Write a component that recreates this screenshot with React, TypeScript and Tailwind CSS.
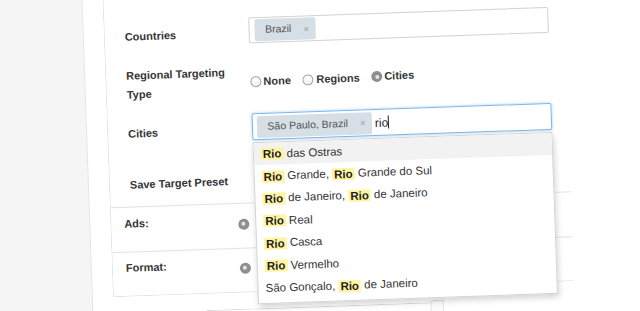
import React from 'react';

const label = 'text-[11px] font-bold text-[#353535] leading-[16px]';

function Radio({ checked }: { checked?: boolean }) {
  if (checked) {
    return (
      <span className="w-[11px] h-[11px] rounded-full bg-[#8e8e8e] flex items-center justify-center shrink-0">
        <span className="w-[4px] h-[4px] rounded-full bg-[#e6e6e6]" />
      </span>
    );
  }
  return (
    <span className="w-[11px] h-[11px] rounded-full border border-[#a0a0a0] bg-gradient-to-b from-white to-[#f0f0f0] shrink-0" />
  );
}

function Tag({ text }: { text: string }) {
  return (
    <span className="h-[22px] flex items-center bg-[#d6dee6] rounded-[2px] pl-[10.5px] pr-[6px] text-[10.5px] text-[#555] shrink-0">
      {text}
      <span className="ml-[12px] w-[6px] text-[10px] text-[#9aa4ad]">×</span>
    </span>
  );
}

// highlighted match inside a suggestion
function Hit() {
  return (
    <span className="inline-block h-[12px] leading-[12px] px-[2px] bg-[#fff4a3] font-bold text-[#1e1e1e]">
      Rio
    </span>
  );
}

const suggestions: React.ReactNode[] = [
  <><Hit /> das Ostras</>,
  <><Hit /> Grande, <Hit /> Grande do Sul</>,
  <><Hit /> de Janeiro, <Hit /> de Janeiro</>,
  <><Hit /> Real</>,
  <><Hit /> Casca</>,
  <><Hit /> Vermelho</>,
  <>São Gonçalo, <Hit /> de Janeiro</>,
];

export default function App() {
  return (
    <div className="w-[640px] h-[311px] overflow-hidden bg-[#f5f5f5] font-['Liberation_Sans',Arial,sans-serif]">
      <div className="w-[680px] h-[351px] mt-[-20px] ml-[-20px] flex -rotate-2 origin-[340px_175px]">
        {/* left gray strip */}
        <div className="w-[106.5px] shrink-0 bg-[#f5f5f5]" />

        {/* page */}
        <div className="flex-1 bg-white border-l border-[#e4e4e4] pl-[20.5px] flex flex-col">
          <div className="w-[461px] border-l border-b border-[#e2e2e2] rounded-bl-[3px] flex flex-col">
            {/* Targeting */}
            <div className="h-[220px] pt-[35px] pl-[20px] flex flex-col">
              <div className="flex items-center h-[26px]">
                <span className={`${label} w-[124px] mt-[4px]`}>Countries</span>
                <div className="w-[300px] h-[26px] border border-[#d2d2d2] rounded-[2px] flex items-center pl-[5px]">
                  <Tag text="Brazil" />
                </div>
              </div>

              <div className="flex items-center mt-[19px]">
                <span className="text-[11px] font-bold text-[#353535] leading-[19px] w-[124px]">
                  Regional Targeting
                  <br />
                  Type
                </span>
                <div className="flex items-center text-[11px] font-bold text-[#353535]">
                  <span className="w-[52px] flex items-center gap-[2px]">
                    <Radio />
                    None
                  </span>
                  <span className="w-[69px] flex items-center gap-[3px]">
                    <Radio />
                    Regions
                  </span>
                  <span className="flex items-center gap-[2px] -mt-[1px]">
                    <Radio checked />
                    Cities
                  </span>
                </div>
              </div>

              <div className="flex items-center h-[27px] mt-[13px]">
                <span className={`${label} w-[124px] mt-[4px]`}>Cities</span>
                <div className="relative z-10">
                  <div className="w-[300px] h-[27px] border border-[#79b7ec] rounded-[2px] shadow-[0_0_3px_rgba(90,160,230,0.55)] flex items-center pl-[4px]">
                    <Tag text="São Paulo, Brazil" />
                    <span className="ml-[3px] text-[12px] text-[#222]">rio</span>
                    <span className="w-px h-[13px] bg-[#222]" />
                  </div>

                  {/* suggestions */}
                  <div className="absolute left-0 top-[29px] w-[300px] bg-white border border-[#d4d4d4] shadow-[1px_3px_6px_rgba(0,0,0,0.18)] pb-[3px]">
                    {suggestions.map((s, i) => (
                      <div
                        key={i}
                        className={`h-[22.4px] flex items-center pl-[7px] text-[11.5px] text-[#333] whitespace-pre ${
                          i === 0 ? 'bg-[#f2f2f2]' : ''
                        }`}
                      >
                        {s}
                      </div>
                    ))}
                  </div>
                </div>
              </div>

              <div className="flex items-start h-[22px] mt-[30.5px]">
                <span className={`${label} w-[124px] mt-[1px]`}>Save Target Preset</span>
                <div className="w-[300px] h-[22px] border border-[#d2d2d2] rounded-[2px]" />
              </div>
            </div>

            {/* Ads */}
            <div className="h-[45px] border-t border-[#e2e2e2] pl-[13px] flex items-start">
              <span className={`${label} w-[113.5px] mt-[7.5px]`}>Ads:</span>
              <span className="mt-[14.8px]">
                <Radio checked />
              </span>
            </div>

            {/* Format */}
            <div className="h-[44px] border-t border-[#e2e2e2] pl-[13px] flex items-start">
              <span className={`${label} w-[113.5px] mt-[7.2px]`}>Format:</span>
              <span className="mt-[13.9px]">
                <Radio checked />
              </span>
            </div>
          </div>

          {/* controls below the card */}
          <div className="flex items-start ml-[92px] mt-[16px]">
            <div className="w-[225px] h-[30px] border-t border-l border-[#dadada] rounded-tl-[3px]" />
            <div className="w-[14px] h-[32px] -mt-[2px] border-t border-x border-[#dadada] rounded-t-[3px] bg-[#fafafa]" />
          </div>
        </div>
      </div>
    </div>
  );
}
